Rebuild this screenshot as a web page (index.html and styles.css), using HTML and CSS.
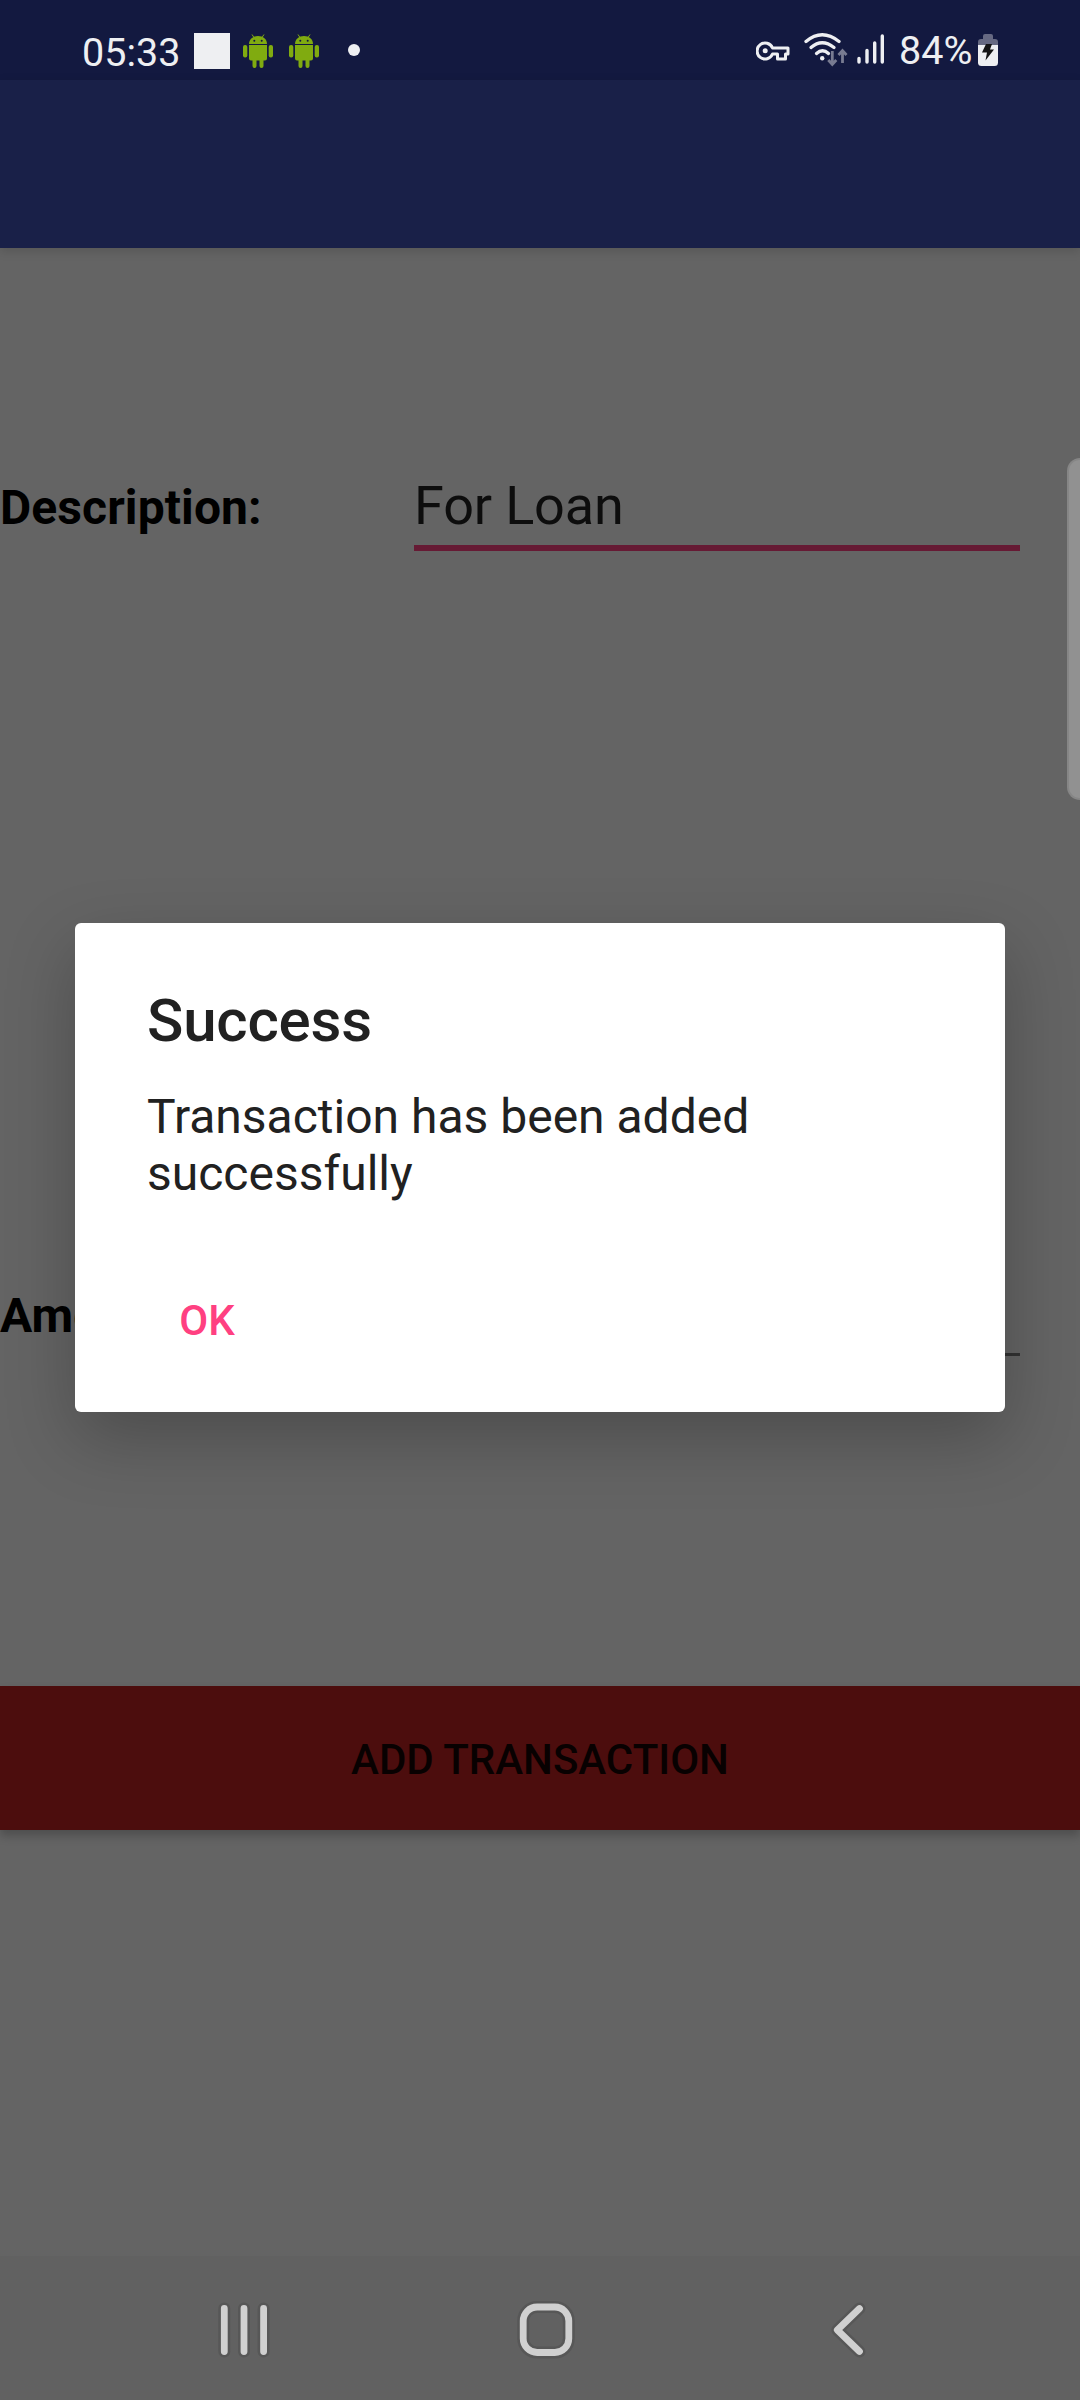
FILE: index.html
```html
<!DOCTYPE html>
<html lang="en">
<head>
<meta charset="utf-8">
<title>Add Transaction</title>
<link rel="stylesheet" href="styles.css">
</head>
<body>
<div class="screen">
  <header class="status-bar">
    <div class="status-left">
      <span class="clock">05:33</span>
      <span class="notification-square"></span>
      <svg class="android" viewBox="0 0 30 34"><g fill="#80ab10"><path d="M6 10C6 5 10 2 15 2s9 3 9 8z"/><path d="M9 .5l2 3M21 .5l-2 3" stroke="#80ab10" stroke-width="1"/><path d="M6 11h18v13.500a2 2 0 0 1-2 2h-1.500V32a2 2 0 0 1-4 0v-5.500h-3V32a2 2 0 0 1-4 0v-5.500H8a2 2 0 0 1-2-2z"/><rect x="0" y="11" width="4.300" height="12.500" rx="2"/><rect x="25.700" y="11" width="4.300" height="12.500" rx="2"/></g><circle cx="11.300" cy="6.800" r="1" fill="#131940"/><circle cx="18.700" cy="6.800" r="1" fill="#131940"/></svg>
      <svg class="android" viewBox="0 0 30 34"><g fill="#80ab10"><path d="M6 10C6 5 10 2 15 2s9 3 9 8z"/><path d="M9 .5l2 3M21 .5l-2 3" stroke="#80ab10" stroke-width="1"/><path d="M6 11h18v13.500a2 2 0 0 1-2 2h-1.500V32a2 2 0 0 1-4 0v-5.500h-3V32a2 2 0 0 1-4 0v-5.500H8a2 2 0 0 1-2-2z"/><rect x="0" y="11" width="4.300" height="12.500" rx="2"/><rect x="25.700" y="11" width="4.300" height="12.500" rx="2"/></g><circle cx="11.300" cy="6.800" r="1" fill="#131940"/><circle cx="18.700" cy="6.800" r="1" fill="#131940"/></svg>
      <span class="more-dot"></span>
    </div>
    <div class="status-right">
      <svg class="key" viewBox="0 0 34 20"><path d="M16.500 7H32v6h-2.500v5h-8v-5h-5A8 8 0 1 1 16.500 7z" fill="none" stroke="#eeeff2" stroke-width="3" stroke-linejoin="round"/><circle cx="9.200" cy="9.800" r="2.500" fill="#eeeff2"/></svg>
      <svg class="wifi" viewBox="0 0 44 34"><g fill="none" stroke="#eeeff2" stroke-width="3.300" stroke-linecap="round"><path d="M2 8.500Q18 -5 35 8.500"/><path d="M7 14.500Q18 5 30 14.500"/><path d="M12.500 20.500q6-5.500 12 0"/></g><circle cx="18.200" cy="25.300" r="2.200" fill="#eeeff2"/><path d="M28.300 18v13M24.300 27l4 4.500 4-4.500M38.500 30V18M34.500 22l4-4.500 4 4.500" fill="none" stroke="#787b91" stroke-width="2.800"/></svg>
      <svg class="signal" viewBox="0 0 28 30"><path d="M2 24.500v3.500M10 16.500v11.500M17.700 9v19M25.300 2v26" stroke="#eeeff2" stroke-width="3.400" stroke-linecap="round"/></svg>
      <span class="percent">84%</span>
      <svg class="battery" viewBox="0 0 20 32"><path d="M0 11V8q0-3 3-3h2V2q0-2 2-2h6q2 0 2 2v3h2q3 0 3 3v3z" fill="#666982"/><path d="M0 11h20v17.500q0 3.500-3.500 3.500h-13Q0 32 0 28.500z" fill="#eeeff2"/><path d="M8 10h6l-2 5.500h4L7.500 26.500l1.500-8H4z" fill="#141414"/></svg>
    </div>
  </header>
  <div class="app-bar"></div>
  <main class="form">
    <div class="row row-description">
      <label class="label">Description:</label>
      <div class="field field-focused">For Loan</div>
    </div>
    <div class="row row-amount">
      <label class="label">Amount:</label>
      <div class="field"></div>
    </div>
    <button class="submit">ADD TRANSACTION</button>
  </main>
  <nav class="nav-bar">
    <svg class="nav-icons" viewBox="0 0 1080 144" fill="none" stroke-linecap="round" stroke-linejoin="round">
      <g stroke="#575757" stroke-width="12"><path d="M224.300 52.500v43M244 52.500v43M263.600 52.500v43"/><rect x="523.200" y="51" width="45.600" height="45.500" rx="14"/><path d="M859.500 52.500L837.300 74l22.200 21.500"/></g>
      <g stroke="#d0d0d0" stroke-width="6.800"><path d="M224.300 52.500v43M244 52.500v43M263.600 52.500v43"/><rect x="523.200" y="51" width="45.600" height="45.500" rx="14"/><path d="M859.500 52.500L837.300 74l22.200 21.500"/></g>
    </svg>
  </nav>
  <div class="edge-handle"></div>
  <div class="overlay">
    <section class="dialog">
      <h1 class="dialog-title">Success</h1>
      <p class="dialog-message">Transaction has been added successfully</p>
      <button class="dialog-ok">OK</button>
    </section>
  </div>
</div>
</body>
</html>
```
FILE: styles.css
```css
* { box-sizing: border-box; }
body { margin: 0; font-family: Roboto, sans-serif; }
button { border: 0; margin: 0; font-family: inherit; }

.screen {
  position: relative;
  width: 1080px;
  height: 2400px;
  overflow: hidden;
  display: flex;
  flex-direction: column;
  background: #646464;
}

.status-bar {
  height: 80px;
  padding: 0 82px;
  display: flex;
  justify-content: space-between;
  background: #131940;
  color: #eeeff2;
  font-size: 39.5px;
  line-height: 47px;
}
.status-left, .status-right { display: flex; align-items: flex-start; }
.clock { width: 112px; margin-top: 29px; white-space: nowrap; }
.notification-square { width: 36px; height: 36px; margin: 33px 13px 0 0; background: #eeeff2; }
.android { width: 30px; height: 34px; margin: 34px 16px 0 0; }
.more-dot { width: 12px; height: 12px; margin: 44px 0 0 13px; border-radius: 50%; background: #eeeff2; }
.key { width: 34px; height: 20px; margin: 41px 14px 0 0; }
.wifi { width: 44px; height: 34px; margin: 33px 9px 0 0; }
.signal { width: 28px; height: 30px; margin: 34px 14px 0 0; }
.percent { width: 79px; margin-top: 27px; white-space: nowrap; }
.battery { width: 20px; height: 32px; margin-top: 34px; }

.app-bar {
  height: 168px;
  background: #192048;
  box-shadow: 0 3px 10px rgba(0, 0, 0, 0.15);
}

.form { height: 2008px; display: flex; flex-direction: column; }
.row { display: flex; flex-shrink: 0; justify-content: space-between; padding-right: 60px; }
.row-description { height: 808px; padding-top: 218px; }
.row-amount { height: 630px; padding-top: 218px; }
.label { margin-top: 14px; font-size: 48px; line-height: 56px; font-weight: 700; letter-spacing: 0.1px; color: #000; }
.field {
  width: 606px;
  height: 82px;
  border-bottom: 3px solid #323232;
  font-size: 54px;
  line-height: 79px;
  letter-spacing: -0.15px;
  color: #0d0d0d;
}
.field-focused { height: 85px; border-bottom: 6px solid #661a34; }

.submit {
  height: 144px;
  flex-shrink: 0;
  padding: 3px 0 0;
  background: #4c0d0d;
  color: #080101;
  font-size: 42px;
  font-weight: 500;
  box-shadow: 0 6px 9px rgba(0, 0, 0, 0.22);
}

.nav-bar { height: 144px; background: #616161; }
.nav-icons { display: block; width: 1080px; height: 144px; }

.edge-handle {
  position: absolute;
  top: 458px;
  right: 0;
  width: 13px;
  height: 342px;
  border: 2px solid #868686;
  border-right: 0;
  border-radius: 13px 0 0 13px;
  background: #919191;
}

.overlay {
  position: absolute;
  inset: 0;
  display: flex;
  flex-direction: column;
  align-items: center;
  padding-top: 923px;
}
.dialog {
  width: 930px;
  height: 489px;
  padding: 63px 72px 0;
  border-radius: 6px;
  background: #fff;
  color: #212121;
  box-shadow: 0 26px 70px rgba(0, 0, 0, 0.24);
}
.dialog-title { margin: 0; font-size: 60px; line-height: 70px; font-weight: 500; letter-spacing: -0.2px; }
.dialog-message { margin: 32px 0 0; font-size: 48px; line-height: 57px; }
.dialog-ok {
  width: 120px;
  height: 60px;
  margin-top: 88px;
  padding: 0;
  background: none;
  color: #ff4081;
  font-size: 42px;
  font-weight: 500;
}
```
